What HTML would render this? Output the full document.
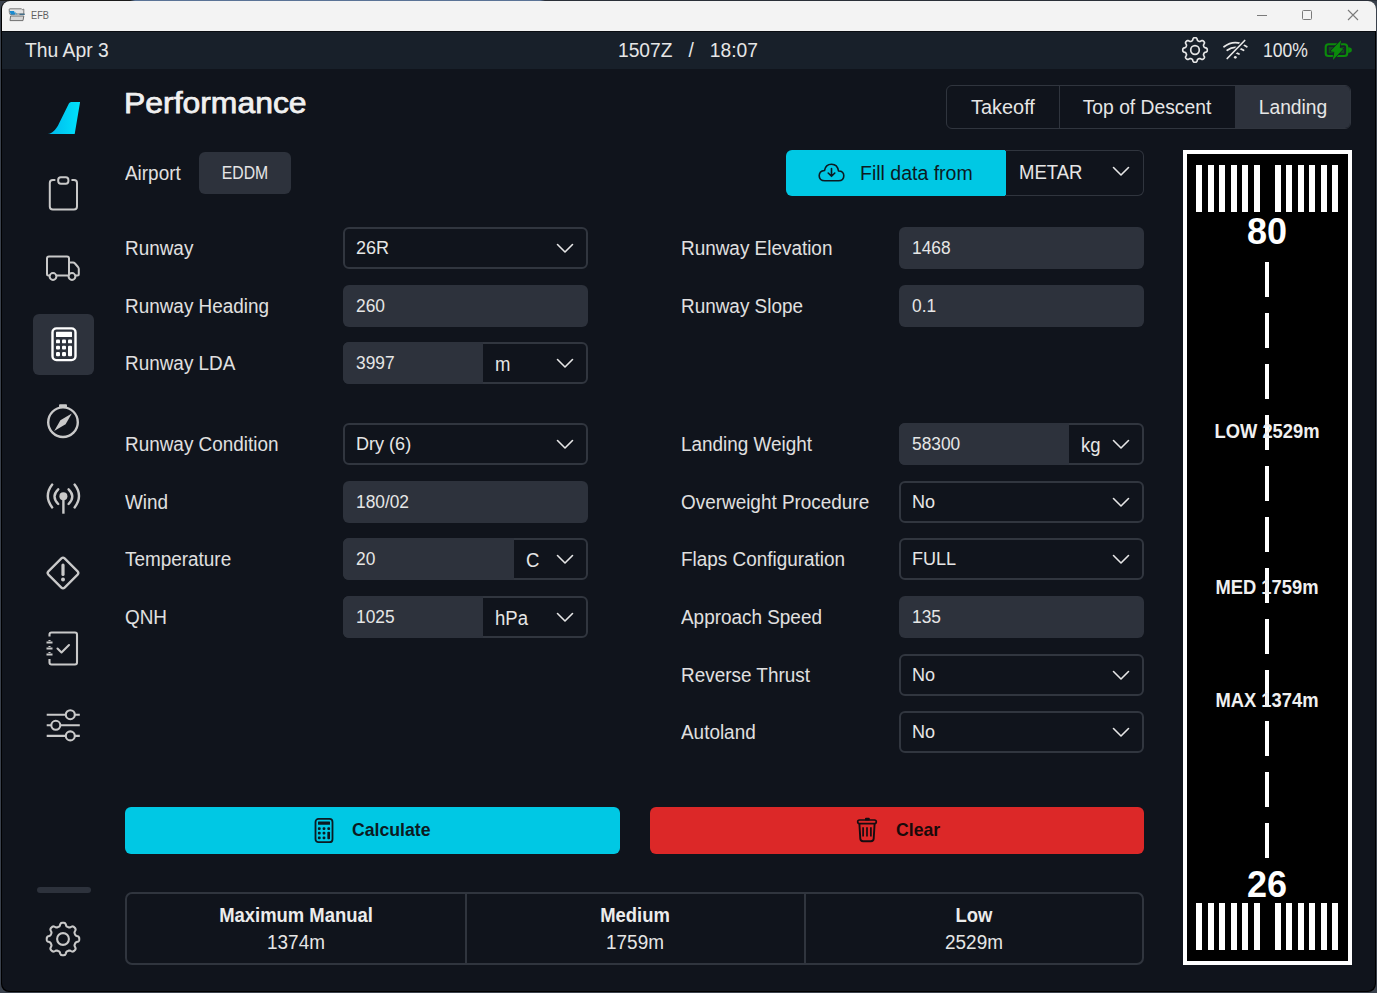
<!DOCTYPE html>
<html><head><meta charset="utf-8">
<style>
*{box-sizing:border-box;margin:0;padding:0}
html,body{width:1377px;height:993px;overflow:hidden;background:#3a414c;font-family:"Liberation Sans",sans-serif;position:relative}
.a{position:absolute}
.t{position:absolute;white-space:nowrap}
svg{display:block}
</style></head><body>

<div class="a" style="left:0px;top:0px;width:1377px;height:1px;background:linear-gradient(90deg,#1a1a1a 0,#1a1a1a 130px,#5a7396 135px,#5a7396 540px,#2a2f38 545px,#2a2f38 100%)"></div>
<div class="a" style="left:1px;top:1px;width:1375px;height:991px;background:#000;border-radius:8px"></div>
<div class="a" style="left:2px;top:1px;width:1373px;height:990px;background:#10141c;border-radius:8px;overflow:hidden"></div>
<div class="a" style="left:2px;top:1px;width:1374px;height:30px;background:#f3f3f3;border-radius:8px 8px 0 0"></div>
<div class="a" style="left:2px;top:31px;width:1373px;height:1px;background:#0a0d12"></div>
<div class="a" style="left:2px;top:32px;width:1373px;height:37px;background:#18202a"></div>
<div class="a" style="left:6px;top:6px;width:24px;height:18px"><svg width="24" height="18" viewBox="0 0 24 18"><path d="M3.2 3.5 Q3 2.8 4 2.8 H15.5 L16.5 3.8 Q17 3 17.8 3.2 V8 H9 L8 8.6 Q6 8.4 4.2 8.6 Q3 7 3.2 3.5 Z" fill="#e2e2e2" stroke="#6e6e6e" stroke-width="0.9"/><path d="M3.6 5 H8 L9.5 8.4 H4.8 Z" fill="#1a8ad0"/><path d="M8.8 5.5 L10 8.4 H11.5 Z" fill="#3a9ac8"/><path d="M13.5 8.3 H18.8" stroke="#3d6a86" stroke-width="1.3"/><path d="M4.6 10 H17.8 L17 14.6 H4 Z" fill="#d6d6d6" stroke="#707070" stroke-width="1"/></svg></div>
<div class="t" style="left:31px;top:-5.0px;line-height:40px;font-size:11.5px;color:#5f5f5f;font-weight:normal;transform:scaleX(0.8);transform-origin:left center;">EFB</div>
<div class="a" style="left:1257px;top:15px;width:10px;height:1px;background:#7a7a7a"></div>
<div class="a" style="left:1302px;top:10px;width:10px;height:10px;border:1px solid #7a7a7a;border-radius:1.5px"></div>
<div class="a" style="left:1347px;top:9px;width:12px;height:12px"><svg width="12" height="12" viewBox="0 0 12 12"><path d="M1 1 L11 11 M11 1 L1 11" stroke="#7a7a7a" stroke-width="1.1"/></svg></div>
<div class="t" style="left:25px;top:30.0px;line-height:40px;font-size:19.5px;color:#e6e6e6;font-weight:normal;transform:scaleX(0.99);transform-origin:left center;">Thu Apr 3</div>
<div class="t" style="left:618px;top:30.0px;line-height:40px;font-size:19.5px;color:#e6e6e6;font-weight:normal;transform:scaleX(0.985);transform-origin:left center;">1507Z&nbsp;&nbsp;&nbsp;/&nbsp;&nbsp;&nbsp;18:07</div>
<div class="t" style="left:1263px;top:30.0px;line-height:40px;font-size:19.5px;color:#e6e6e6;font-weight:normal;transform:scaleX(0.9);transform-origin:left center;">100%</div>
<div class="a" style="left:1180.2px;top:35.3px"><svg width="30" height="30" viewBox="0 0 30 30"><path fill="none" stroke="#e6e6e6" stroke-width="1.7" stroke-linejoin="round" d="M15.00 2.75 L15.48 2.77 L15.96 2.84 L16.42 3.03 L16.83 3.47 L17.13 4.31 L17.36 5.15 L17.64 5.62 L17.97 5.86 L18.31 6.03 L18.65 6.18 L19.00 6.32 L19.36 6.44 L19.76 6.50 L20.29 6.36 L21.06 5.94 L21.86 5.56 L22.46 5.53 L22.92 5.73 L23.31 6.01 L23.66 6.34 L23.99 6.69 L24.27 7.08 L24.47 7.54 L24.44 8.14 L24.06 8.94 L23.64 9.71 L23.50 10.24 L23.56 10.64 L23.68 11.00 L23.82 11.35 L23.97 11.69 L24.14 12.03 L24.38 12.36 L24.85 12.64 L25.69 12.87 L26.53 13.17 L26.97 13.58 L27.16 14.04 L27.23 14.52 L27.25 15.00 L27.23 15.48 L27.16 15.96 L26.97 16.42 L26.53 16.83 L25.69 17.13 L24.85 17.36 L24.38 17.64 L24.14 17.97 L23.97 18.31 L23.82 18.65 L23.68 19.00 L23.56 19.36 L23.50 19.76 L23.64 20.29 L24.06 21.06 L24.44 21.86 L24.47 22.46 L24.27 22.92 L23.99 23.31 L23.66 23.66 L23.31 23.99 L22.92 24.27 L22.46 24.47 L21.86 24.44 L21.06 24.06 L20.29 23.64 L19.76 23.50 L19.36 23.56 L19.00 23.68 L18.65 23.82 L18.31 23.97 L17.97 24.14 L17.64 24.38 L17.36 24.85 L17.13 25.69 L16.83 26.53 L16.42 26.97 L15.96 27.16 L15.48 27.23 L15.00 27.25 L14.52 27.23 L14.04 27.16 L13.58 26.97 L13.17 26.53 L12.87 25.69 L12.64 24.85 L12.36 24.38 L12.03 24.14 L11.69 23.97 L11.35 23.82 L11.00 23.68 L10.64 23.56 L10.24 23.50 L9.71 23.64 L8.94 24.06 L8.14 24.44 L7.54 24.47 L7.08 24.27 L6.69 23.99 L6.34 23.66 L6.01 23.31 L5.73 22.92 L5.53 22.46 L5.56 21.86 L5.94 21.06 L6.36 20.29 L6.50 19.76 L6.44 19.36 L6.32 19.00 L6.18 18.65 L6.03 18.31 L5.86 17.97 L5.62 17.64 L5.15 17.36 L4.31 17.13 L3.47 16.83 L3.03 16.42 L2.84 15.96 L2.77 15.48 L2.75 15.00 L2.77 14.52 L2.84 14.04 L3.03 13.58 L3.47 13.17 L4.31 12.87 L5.15 12.64 L5.62 12.36 L5.86 12.03 L6.03 11.69 L6.18 11.35 L6.32 11.00 L6.44 10.64 L6.50 10.24 L6.36 9.71 L5.94 8.94 L5.56 8.14 L5.53 7.54 L5.73 7.08 L6.01 6.69 L6.34 6.34 L6.69 6.01 L7.08 5.73 L7.54 5.53 L8.14 5.56 L8.94 5.94 L9.71 6.36 L10.24 6.50 L10.64 6.44 L11.00 6.32 L11.35 6.18 L11.69 6.03 L12.03 5.86 L12.36 5.62 L12.64 5.15 L12.87 4.31 L13.17 3.47 L13.58 3.03 L14.04 2.84 L14.52 2.77 Z"/><circle cx="15" cy="15" r="4.3" fill="none" stroke="#e6e6e6" stroke-width="1.7"/></svg></div>
<div class="a" style="left:1222px;top:38px"><svg width="30" height="24" viewBox="0 0 30 24"><g fill="none" stroke="#e6e6e6" stroke-width="1.7" stroke-linecap="round"><path d="M2 8.8 Q13 0.5 24.8 8.8"/><path d="M5.2 12.3 Q13 6.5 21.6 12.3"/><path d="M9.5 16 Q13 13.6 17 16"/></g><circle cx="13.3" cy="19.3" r="1.4" fill="#e6e6e6"/><path d="M24 1.5 L4 23" stroke="#18202a" stroke-width="4.5"/><path d="M22.7 2.5 L5.2 20.5" stroke="#e6e6e6" stroke-width="1.7" stroke-linecap="round"/></svg></div>
<div class="a" style="left:1320px;top:36px"><svg width="36" height="28" viewBox="0 0 36 28"><rect x="5.7" y="8.2" width="21.5" height="11.8" rx="2.8" fill="none" stroke="#0b8a0b" stroke-width="2.1"/><path d="M28.2 11.3 A3.7 2.8 0 0 1 28.2 16.9 Z" fill="#0b8a0b"/><rect x="8.7" y="11" width="15.5" height="6.2" fill="#0b8a0b" opacity="0.45"/><path d="M20.9 4.5 L10.7 15.2 L14.6 15.8 L13 23.7 L23.1 12.7 L19.5 12.1 Z" fill="#0b8a0b" stroke="#18202a" stroke-width="1.6" stroke-linejoin="round" paint-order="stroke"/><path d="M20.9 4.5 L10.7 15.2 L14.6 15.8 L13 23.7 L23.1 12.7 L19.5 12.1 Z" fill="#0b8a0b"/></svg></div>
<div class="a" style="left:40px;top:95px"><svg width="50" height="45" viewBox="0 0 50 45"><defs><linearGradient id="lg" x1="0" y1="0" x2="1" y2="0"><stop offset="0" stop-color="#00b8ec"/><stop offset="1" stop-color="#00e2fb"/></linearGradient></defs><path d="M31.2 7 H40.1 L34.7 39 H7.7 C12.5 38.6 16.2 34.5 19 28.5 L28.9 8.6 Q29.7 7 31.2 7 Z" fill="url(#lg)"/></svg></div>
<div class="a" style="left:40px;top:168px"><svg width="45" height="50" viewBox="0 0 45 50"><path d="M14.6 12 H12.8 Q9.8 12 9.8 15 V38.5 Q9.8 41.5 12.8 41.5 H34 Q37 41.5 37 38.5 V15 Q37 12 34 12 H32.2" fill="none" stroke="#c9c9c9" stroke-width="2" stroke-linecap="round"/><rect x="18.2" y="9.3" width="10.2" height="6.4" rx="2.6" fill="none" stroke="#c9c9c9" stroke-width="2"/></svg></div>
<div class="a" style="left:45px;top:255px"><svg width="36" height="28" viewBox="0 0 36 28"><path d="M4 1.5 H22 Q24 1.5 24 3.5 V20.5 H3.5 Q2 20.5 2 19 V3.5 Q2 1.5 4 1.5 Z M24 7.5 H28 Q29 7.5 30 8.5 L33 12 Q33.8 13 33.8 14 V19 Q33.8 20.5 32.3 20.5 H24" fill="none" stroke="#c9c9c9" stroke-width="2" stroke-linejoin="round"/><circle cx="8" cy="21.5" r="3.4" fill="#10141c" stroke="#c9c9c9" stroke-width="2"/><circle cx="27" cy="21.5" r="3.4" fill="#10141c" stroke="#c9c9c9" stroke-width="2"/></svg></div>
<div class="a" style="left:33px;top:314px;width:61px;height:61px;background:#2d323c;border-radius:6px"></div>
<div class="a" style="left:50.5px;top:327.3px"><svg width="26" height="34.6" viewBox="0 0 26 36" preserveAspectRatio="none"><rect x="1.5" y="1.5" width="23" height="33" rx="4" fill="none" stroke="#fff" stroke-width="2.4"/><rect x="5" y="5" width="16" height="5.5" fill="#fff" rx="0.6"/><g fill="#fff"><rect x="5" y="13" width="4" height="4" rx="1"/><rect x="11" y="13" width="4" height="4" rx="1"/><rect x="17" y="13" width="4" height="4" rx="1"/><rect x="5" y="19.5" width="4" height="4" rx="1"/><rect x="11" y="19.5" width="4" height="4" rx="1"/><rect x="17" y="19.5" width="4" height="11" rx="1"/><rect x="5" y="26" width="4" height="4.5" rx="1.2"/><rect x="11" y="26" width="4" height="4.5" rx="1.2"/></g></svg></div>
<div class="a" style="left:46px;top:403px"><svg width="34" height="36" viewBox="0 0 34 36"><circle cx="17" cy="19.2" r="14.8" fill="none" stroke="#c9c9c9" stroke-width="2.4"/><rect x="13" y="1.2" width="8" height="3.4" rx="1" fill="#c9c9c9"/><path d="M25.8 10.4 L19.6 21.2 L8.2 28 L14.4 17.2 Z" fill="#c9c9c9"/></svg></div>
<div class="a" style="left:45px;top:483px"><svg width="36" height="33" viewBox="0 0 36 33"><circle cx="18.4" cy="13.3" r="4" fill="#c9c9c9"/><path d="M18.4 15 V30.7" stroke="#c9c9c9" stroke-width="2.4"/><path d="M13.2 6.3 Q5.8 13.5 13.2 21 M23.6 6.3 Q31 13.5 23.6 21 M7.2 1.6 Q-1.6 13 7.2 24.4 M29.6 1.6 Q38.4 13 29.6 24.4" fill="none" stroke="#c9c9c9" stroke-width="2.4" stroke-linecap="round"/></svg></div>
<div class="a" style="left:45px;top:555px"><svg width="36" height="36" viewBox="0 0 36 36"><path d="M16.4 3.4 Q18 1.8 19.6 3.4 L32.6 16.4 Q34.2 18 32.6 19.6 L19.6 32.6 Q18 34.2 16.4 32.6 L3.4 19.6 Q1.8 18 3.4 16.4 Z" fill="none" stroke="#c9c9c9" stroke-width="2.3" stroke-linejoin="round"/><path d="M18 10 V19.5" stroke="#c9c9c9" stroke-width="3.2" stroke-linecap="round"/><circle cx="18" cy="24.6" r="2" fill="#c9c9c9"/></svg></div>
<div class="a" style="left:45px;top:631px"><svg width="36" height="35" viewBox="0 0 36 35"><path d="M4.5 5.5 V3.5 Q4.5 1.5 6.5 1.5 H30 Q32 1.5 32 3.5 V31.5 Q32 33.5 30 33.5 H6.5 Q4.5 33.5 4.5 31.5 V28" fill="none" stroke="#c9c9c9" stroke-width="2.1"/><path d="M1.5 11.5 H7.5 M1.5 17.5 H7.5 M1.5 23.5 H7.5" stroke="#c9c9c9" stroke-width="2.1"/><path d="M4.5 9 V10 M4.5 15 V16 M4.5 21 V22" stroke="#c9c9c9" stroke-width="2.1"/><path d="M12.5 17.5 L16.5 21.5 L24 14" fill="none" stroke="#c9c9c9" stroke-width="2.1" stroke-linecap="round" stroke-linejoin="round"/></svg></div>
<div class="a" style="left:45px;top:708px"><svg width="36" height="34" viewBox="0 0 36 34"><path d="M1.7 6.7 H20.8 M29.8 6.7 H34.8 M1.7 17.3 H6.3 M15.3 17.3 H34.8 M1.7 27.9 H20.8 M29.8 27.9 H34.8" stroke="#c9c9c9" stroke-width="2.1"/><circle cx="25.3" cy="6.7" r="4.5" fill="none" stroke="#c9c9c9" stroke-width="2.1"/><circle cx="10.8" cy="17.3" r="4.5" fill="none" stroke="#c9c9c9" stroke-width="2.1"/><circle cx="25.3" cy="27.9" r="4.5" fill="none" stroke="#c9c9c9" stroke-width="2.1"/></svg></div>
<div class="a" style="left:37px;top:887px;width:54px;height:6px;background:#2d323c;border-radius:3px"></div>
<div class="a" style="left:43.2px;top:918.8px"><svg width="40" height="40" viewBox="0 0 40 40"><path fill="none" stroke="#c9c9c9" stroke-width="2.1" stroke-linejoin="round" d="M20.00 3.75 L20.64 3.78 L21.27 3.87 L21.88 4.10 L22.43 4.65 L22.85 5.68 L23.19 6.72 L23.58 7.31 L24.02 7.62 L24.49 7.84 L24.96 8.04 L25.43 8.23 L25.91 8.40 L26.44 8.50 L27.14 8.35 L28.11 7.86 L29.13 7.43 L29.91 7.42 L30.51 7.70 L31.02 8.08 L31.49 8.51 L31.92 8.98 L32.30 9.49 L32.58 10.09 L32.57 10.87 L32.14 11.89 L31.65 12.86 L31.50 13.56 L31.60 14.09 L31.77 14.57 L31.96 15.04 L32.16 15.51 L32.38 15.98 L32.69 16.42 L33.28 16.81 L34.32 17.15 L35.35 17.57 L35.90 18.12 L36.13 18.73 L36.22 19.36 L36.25 20.00 L36.22 20.64 L36.13 21.27 L35.90 21.88 L35.35 22.43 L34.32 22.85 L33.28 23.19 L32.69 23.58 L32.38 24.02 L32.16 24.49 L31.96 24.96 L31.77 25.43 L31.60 25.91 L31.50 26.44 L31.65 27.14 L32.14 28.11 L32.57 29.13 L32.58 29.91 L32.30 30.51 L31.92 31.02 L31.49 31.49 L31.02 31.92 L30.51 32.30 L29.91 32.58 L29.13 32.57 L28.11 32.14 L27.14 31.65 L26.44 31.50 L25.91 31.60 L25.43 31.77 L24.96 31.96 L24.49 32.16 L24.02 32.38 L23.58 32.69 L23.19 33.28 L22.85 34.32 L22.43 35.35 L21.88 35.90 L21.27 36.13 L20.64 36.22 L20.00 36.25 L19.36 36.22 L18.73 36.13 L18.12 35.90 L17.57 35.35 L17.15 34.32 L16.81 33.28 L16.42 32.69 L15.98 32.38 L15.51 32.16 L15.04 31.96 L14.57 31.77 L14.09 31.60 L13.56 31.50 L12.86 31.65 L11.89 32.14 L10.87 32.57 L10.09 32.58 L9.49 32.30 L8.98 31.92 L8.51 31.49 L8.08 31.02 L7.70 30.51 L7.42 29.91 L7.43 29.13 L7.86 28.11 L8.35 27.14 L8.50 26.44 L8.40 25.91 L8.23 25.43 L8.04 24.96 L7.84 24.49 L7.62 24.02 L7.31 23.58 L6.72 23.19 L5.68 22.85 L4.65 22.43 L4.10 21.88 L3.87 21.27 L3.78 20.64 L3.75 20.00 L3.78 19.36 L3.87 18.73 L4.10 18.12 L4.65 17.57 L5.68 17.15 L6.72 16.81 L7.31 16.42 L7.62 15.98 L7.84 15.51 L8.04 15.04 L8.23 14.57 L8.40 14.09 L8.50 13.56 L8.35 12.86 L7.86 11.89 L7.43 10.87 L7.42 10.09 L7.70 9.49 L8.08 8.98 L8.51 8.51 L8.98 8.08 L9.49 7.70 L10.09 7.42 L10.87 7.43 L11.89 7.86 L12.86 8.35 L13.56 8.50 L14.09 8.40 L14.57 8.23 L15.04 8.04 L15.51 7.84 L15.98 7.62 L16.42 7.31 L16.81 6.72 L17.15 5.68 L17.57 4.65 L18.12 4.10 L18.73 3.87 L19.36 3.78 Z"/><circle cx="20" cy="20" r="5.9" fill="none" stroke="#c9c9c9" stroke-width="2.1"/></svg></div>
<div class="t" style="left:124px;top:83.2px;line-height:40px;font-size:29px;color:#f0f0f0;font-weight:normal;transform:scaleX(1.1);transform-origin:left center;-webkit-text-stroke:0.75px #f0f0f0;">Performance</div>
<div class="a" style="left:946px;top:85px;width:405px;height:44px;border:1px solid #30353e;border-radius:6px;overflow:hidden"></div>
<div class="a" style="left:1235px;top:86px;width:115px;height:42px;background:#2d323c;border-radius:0 5px 5px 0"></div>
<div class="a" style="left:1059px;top:86px;width:1px;height:42px;background:#30353e"></div>
<div class="t" style="left:702.5px;width:600px;text-align:center;top:87.0px;line-height:40px;font-size:20.5px;color:#e6e6e6;font-weight:normal;transform:scaleX(0.97);transform-origin:center center;">Takeoff</div>
<div class="t" style="left:847px;width:600px;text-align:center;top:87.0px;line-height:40px;font-size:20.5px;color:#e6e6e6;font-weight:normal;transform:scaleX(0.94);transform-origin:center center;">Top of Descent</div>
<div class="t" style="left:993px;width:600px;text-align:center;top:87.0px;line-height:40px;font-size:20.5px;color:#e6e6e6;font-weight:normal;transform:scaleX(0.94);transform-origin:center center;">Landing</div>
<div class="t" style="left:125px;top:153.0px;line-height:40px;font-size:19.5px;color:#e0e0e0;font-weight:normal;transform:scaleX(0.97);transform-origin:left center;">Airport</div>
<div class="a" style="left:199px;top:152px;width:92px;height:42px;background:#2d323c;border-radius:6px"></div>
<div class="t" style="left:-55px;width:600px;text-align:center;top:153.0px;line-height:40px;font-size:17.5px;color:#e6e6e6;font-weight:normal;transform:scaleX(0.9);transform-origin:center center;">EDDM</div>
<div class="a" style="left:786px;top:150px;width:220px;height:46px;background:#00c8e4;border-radius:6px 0 0 6px"></div>
<div class="a" style="left:1005px;top:150px;width:139px;height:46px;border:1.5px solid #30353e;border-left:none;border-radius:0 6px 6px 0"></div>
<div class="a" style="left:818px;top:163px"><svg width="27" height="19" viewBox="0 0 27 19"><path d="M7 17.8 H20.5 Q25.8 17.8 25.8 12.8 Q25.8 8 20.5 8 Q19.5 1.2 13.5 1.2 Q7.5 1.2 6.5 7.5 Q1.2 8 1.2 12.8 Q1.2 17.8 7 17.8 Z" fill="none" stroke="#0c1a22" stroke-width="1.6" stroke-linejoin="round"/><path d="M13.5 5.5 V13.2 M10.2 10 L13.5 13.3 L16.8 10" fill="none" stroke="#0c1a22" stroke-width="1.6" stroke-linecap="round" stroke-linejoin="round"/></svg></div>
<div class="t" style="left:860px;top:153.0px;line-height:40px;font-size:19.5px;color:#0c1a22;font-weight:normal;transform:scaleX(1.0);transform-origin:left center;">Fill data from</div>
<div class="t" style="left:1019px;top:152.0px;line-height:40px;font-size:19.5px;color:#e6e6e6;font-weight:normal;transform:scaleX(0.95);transform-origin:left center;">METAR</div>
<div class="a" style="left:1112px;top:166px;width:18px;height:11px"><svg width="18" height="11" viewBox="0 0 18 11"><path d="M1.5 1.5 L9 9 L16.5 1.5" fill="none" stroke="#e6e6e6" stroke-width="1.6" stroke-linecap="round" stroke-linejoin="round"/></svg></div>
<div class="t" style="left:125px;top:228.0px;line-height:40px;font-size:19.5px;color:#e0e0e0;font-weight:normal;transform:scaleX(0.97);transform-origin:left center;">Runway</div>
<div class="a" style="left:343px;top:227px;width:245px;height:42.4px;border:2px solid #31363f;border-radius:6px"></div>
<div class="t" style="left:356px;top:228.0px;line-height:40px;font-size:19px;color:#e6e6e6;font-weight:normal;transform:scaleX(0.95);transform-origin:left center;">26R</div>
<div class="a" style="left:556.3px;top:243px;width:18px;height:11px"><svg width="18" height="11" viewBox="0 0 18 11"><path d="M1.5 1.5 L9 9 L16.5 1.5" fill="none" stroke="#e6e6e6" stroke-width="1.6" stroke-linecap="round" stroke-linejoin="round"/></svg></div>
<div class="t" style="left:125px;top:286.0px;line-height:40px;font-size:19.5px;color:#e0e0e0;font-weight:normal;transform:scaleX(0.97);transform-origin:left center;">Runway Heading</div>
<div class="a" style="left:343px;top:285px;width:245px;height:42.4px;background:#2d323c;border-radius:6px"></div>
<div class="t" style="left:356px;top:286.2px;line-height:40px;font-size:17.5px;color:#e6e6e6;font-weight:normal;transform:scaleX(0.99);transform-origin:left center;">260</div>
<div class="t" style="left:125px;top:343.0px;line-height:40px;font-size:19.5px;color:#e0e0e0;font-weight:normal;transform:scaleX(0.97);transform-origin:left center;">Runway LDA</div>
<div class="a" style="left:343px;top:342px;width:245px;height:42.4px;border:2px solid #31363f;border-radius:6px"></div>
<div class="a" style="left:343px;top:342px;width:140px;height:42.4px;background:#2d323c;border-radius:6px 0 0 6px"></div>
<div class="t" style="left:356px;top:343.2px;line-height:40px;font-size:17.5px;color:#e6e6e6;font-weight:normal;transform:scaleX(0.99);transform-origin:left center;">3997</div>
<div class="t" style="left:495px;top:343.6px;line-height:40px;font-size:19.5px;color:#e6e6e6;font-weight:normal;transform:scaleX(0.95);transform-origin:left center;">m</div>
<div class="a" style="left:556.3px;top:358px;width:18px;height:11px"><svg width="18" height="11" viewBox="0 0 18 11"><path d="M1.5 1.5 L9 9 L16.5 1.5" fill="none" stroke="#e6e6e6" stroke-width="1.6" stroke-linecap="round" stroke-linejoin="round"/></svg></div>
<div class="t" style="left:125px;top:424.0px;line-height:40px;font-size:19.5px;color:#e0e0e0;font-weight:normal;transform:scaleX(0.97);transform-origin:left center;">Runway Condition</div>
<div class="a" style="left:343px;top:423px;width:245px;height:42.4px;border:2px solid #31363f;border-radius:6px"></div>
<div class="t" style="left:356px;top:424.0px;line-height:40px;font-size:19px;color:#e6e6e6;font-weight:normal;transform:scaleX(0.95);transform-origin:left center;">Dry (6)</div>
<div class="a" style="left:556.3px;top:439px;width:18px;height:11px"><svg width="18" height="11" viewBox="0 0 18 11"><path d="M1.5 1.5 L9 9 L16.5 1.5" fill="none" stroke="#e6e6e6" stroke-width="1.6" stroke-linecap="round" stroke-linejoin="round"/></svg></div>
<div class="t" style="left:125px;top:482.0px;line-height:40px;font-size:19.5px;color:#e0e0e0;font-weight:normal;transform:scaleX(0.97);transform-origin:left center;">Wind</div>
<div class="a" style="left:343px;top:481px;width:245px;height:42.4px;background:#2d323c;border-radius:6px"></div>
<div class="t" style="left:356px;top:482.2px;line-height:40px;font-size:17.5px;color:#e6e6e6;font-weight:normal;transform:scaleX(0.99);transform-origin:left center;">180/02</div>
<div class="t" style="left:125px;top:539.0px;line-height:40px;font-size:19.5px;color:#e0e0e0;font-weight:normal;transform:scaleX(0.97);transform-origin:left center;">Temperature</div>
<div class="a" style="left:343px;top:538px;width:245px;height:42.4px;border:2px solid #31363f;border-radius:6px"></div>
<div class="a" style="left:343px;top:538px;width:171px;height:42.4px;background:#2d323c;border-radius:6px 0 0 6px"></div>
<div class="t" style="left:356px;top:539.2px;line-height:40px;font-size:17.5px;color:#e6e6e6;font-weight:normal;transform:scaleX(0.99);transform-origin:left center;">20</div>
<div class="t" style="left:526px;top:539.6px;line-height:40px;font-size:19.5px;color:#e6e6e6;font-weight:normal;transform:scaleX(0.95);transform-origin:left center;">C</div>
<div class="a" style="left:556.3px;top:554px;width:18px;height:11px"><svg width="18" height="11" viewBox="0 0 18 11"><path d="M1.5 1.5 L9 9 L16.5 1.5" fill="none" stroke="#e6e6e6" stroke-width="1.6" stroke-linecap="round" stroke-linejoin="round"/></svg></div>
<div class="t" style="left:125px;top:597.0px;line-height:40px;font-size:19.5px;color:#e0e0e0;font-weight:normal;transform:scaleX(0.97);transform-origin:left center;">QNH</div>
<div class="a" style="left:343px;top:596px;width:245px;height:42.4px;border:2px solid #31363f;border-radius:6px"></div>
<div class="a" style="left:343px;top:596px;width:140px;height:42.4px;background:#2d323c;border-radius:6px 0 0 6px"></div>
<div class="t" style="left:356px;top:597.2px;line-height:40px;font-size:17.5px;color:#e6e6e6;font-weight:normal;transform:scaleX(0.99);transform-origin:left center;">1025</div>
<div class="t" style="left:495px;top:597.6px;line-height:40px;font-size:19.5px;color:#e6e6e6;font-weight:normal;transform:scaleX(0.95);transform-origin:left center;">hPa</div>
<div class="a" style="left:556.3px;top:612px;width:18px;height:11px"><svg width="18" height="11" viewBox="0 0 18 11"><path d="M1.5 1.5 L9 9 L16.5 1.5" fill="none" stroke="#e6e6e6" stroke-width="1.6" stroke-linecap="round" stroke-linejoin="round"/></svg></div>
<div class="t" style="left:681px;top:228.0px;line-height:40px;font-size:19.5px;color:#e0e0e0;font-weight:normal;transform:scaleX(0.97);transform-origin:left center;">Runway Elevation</div>
<div class="a" style="left:899px;top:227px;width:245px;height:42.4px;background:#2d323c;border-radius:6px"></div>
<div class="t" style="left:912px;top:228.2px;line-height:40px;font-size:17.5px;color:#e6e6e6;font-weight:normal;transform:scaleX(0.99);transform-origin:left center;">1468</div>
<div class="t" style="left:681px;top:286.0px;line-height:40px;font-size:19.5px;color:#e0e0e0;font-weight:normal;transform:scaleX(0.97);transform-origin:left center;">Runway Slope</div>
<div class="a" style="left:899px;top:285px;width:245px;height:42.4px;background:#2d323c;border-radius:6px"></div>
<div class="t" style="left:912px;top:286.2px;line-height:40px;font-size:17.5px;color:#e6e6e6;font-weight:normal;transform:scaleX(0.99);transform-origin:left center;">0.1</div>
<div class="t" style="left:681px;top:424.0px;line-height:40px;font-size:19.5px;color:#e0e0e0;font-weight:normal;transform:scaleX(0.97);transform-origin:left center;">Landing Weight</div>
<div class="a" style="left:899px;top:423px;width:245px;height:42.4px;border:2px solid #31363f;border-radius:6px"></div>
<div class="a" style="left:899px;top:423px;width:170px;height:42.4px;background:#2d323c;border-radius:6px 0 0 6px"></div>
<div class="t" style="left:912px;top:424.2px;line-height:40px;font-size:17.5px;color:#e6e6e6;font-weight:normal;transform:scaleX(0.99);transform-origin:left center;">58300</div>
<div class="t" style="left:1081px;top:424.6px;line-height:40px;font-size:19.5px;color:#e6e6e6;font-weight:normal;transform:scaleX(0.95);transform-origin:left center;">kg</div>
<div class="a" style="left:1112.3px;top:439px;width:18px;height:11px"><svg width="18" height="11" viewBox="0 0 18 11"><path d="M1.5 1.5 L9 9 L16.5 1.5" fill="none" stroke="#e6e6e6" stroke-width="1.6" stroke-linecap="round" stroke-linejoin="round"/></svg></div>
<div class="t" style="left:681px;top:482.0px;line-height:40px;font-size:19.5px;color:#e0e0e0;font-weight:normal;transform:scaleX(0.97);transform-origin:left center;">Overweight Procedure</div>
<div class="a" style="left:899px;top:481px;width:245px;height:42.4px;border:2px solid #31363f;border-radius:6px"></div>
<div class="t" style="left:912px;top:482.0px;line-height:40px;font-size:19px;color:#e6e6e6;font-weight:normal;transform:scaleX(0.95);transform-origin:left center;">No</div>
<div class="a" style="left:1112.3px;top:497px;width:18px;height:11px"><svg width="18" height="11" viewBox="0 0 18 11"><path d="M1.5 1.5 L9 9 L16.5 1.5" fill="none" stroke="#e6e6e6" stroke-width="1.6" stroke-linecap="round" stroke-linejoin="round"/></svg></div>
<div class="t" style="left:681px;top:539.0px;line-height:40px;font-size:19.5px;color:#e0e0e0;font-weight:normal;transform:scaleX(0.97);transform-origin:left center;">Flaps Configuration</div>
<div class="a" style="left:899px;top:538px;width:245px;height:42.4px;border:2px solid #31363f;border-radius:6px"></div>
<div class="t" style="left:912px;top:539.0px;line-height:40px;font-size:19px;color:#e6e6e6;font-weight:normal;transform:scaleX(0.95);transform-origin:left center;">FULL</div>
<div class="a" style="left:1112.3px;top:554px;width:18px;height:11px"><svg width="18" height="11" viewBox="0 0 18 11"><path d="M1.5 1.5 L9 9 L16.5 1.5" fill="none" stroke="#e6e6e6" stroke-width="1.6" stroke-linecap="round" stroke-linejoin="round"/></svg></div>
<div class="t" style="left:681px;top:597.0px;line-height:40px;font-size:19.5px;color:#e0e0e0;font-weight:normal;transform:scaleX(0.97);transform-origin:left center;">Approach Speed</div>
<div class="a" style="left:899px;top:596px;width:245px;height:42.4px;background:#2d323c;border-radius:6px"></div>
<div class="t" style="left:912px;top:597.2px;line-height:40px;font-size:17.5px;color:#e6e6e6;font-weight:normal;transform:scaleX(0.99);transform-origin:left center;">135</div>
<div class="t" style="left:681px;top:655.0px;line-height:40px;font-size:19.5px;color:#e0e0e0;font-weight:normal;transform:scaleX(0.97);transform-origin:left center;">Reverse Thrust</div>
<div class="a" style="left:899px;top:654px;width:245px;height:42.4px;border:2px solid #31363f;border-radius:6px"></div>
<div class="t" style="left:912px;top:655.0px;line-height:40px;font-size:19px;color:#e6e6e6;font-weight:normal;transform:scaleX(0.95);transform-origin:left center;">No</div>
<div class="a" style="left:1112.3px;top:670px;width:18px;height:11px"><svg width="18" height="11" viewBox="0 0 18 11"><path d="M1.5 1.5 L9 9 L16.5 1.5" fill="none" stroke="#e6e6e6" stroke-width="1.6" stroke-linecap="round" stroke-linejoin="round"/></svg></div>
<div class="t" style="left:681px;top:712.0px;line-height:40px;font-size:19.5px;color:#e0e0e0;font-weight:normal;transform:scaleX(0.97);transform-origin:left center;">Autoland</div>
<div class="a" style="left:899px;top:711px;width:245px;height:42.4px;border:2px solid #31363f;border-radius:6px"></div>
<div class="t" style="left:912px;top:712.0px;line-height:40px;font-size:19px;color:#e6e6e6;font-weight:normal;transform:scaleX(0.95);transform-origin:left center;">No</div>
<div class="a" style="left:1112.3px;top:727px;width:18px;height:11px"><svg width="18" height="11" viewBox="0 0 18 11"><path d="M1.5 1.5 L9 9 L16.5 1.5" fill="none" stroke="#e6e6e6" stroke-width="1.6" stroke-linecap="round" stroke-linejoin="round"/></svg></div>
<div class="a" style="left:125px;top:807px;width:494.5px;height:46.5px;background:#00c8e4;border-radius:6px"></div>
<div class="a" style="left:313px;top:817px"><svg width="22" height="27" viewBox="0 0 22 27"><rect x="2.5" y="1.9" width="17" height="23.3" rx="3" fill="none" stroke="#0c1a22" stroke-width="1.8"/><rect x="5" y="4.4" width="12" height="3.4" rx="0.5" fill="#0c1a22"/><g fill="#0c1a22"><rect x="4.9" y="10.2" width="2.8" height="2.8" rx="1"/><rect x="9.6" y="10.2" width="2.8" height="2.8" rx="1"/><rect x="14.3" y="10.2" width="2.8" height="2.8" rx="1"/><rect x="4.9" y="14.8" width="2.8" height="2.8" rx="1"/><rect x="9.6" y="14.8" width="2.8" height="2.8" rx="1"/><rect x="4.9" y="19.4" width="2.8" height="2.8" rx="1"/><rect x="9.6" y="19.4" width="2.8" height="2.8" rx="1"/><rect x="14.35" y="14.8" width="2.7" height="7.4" rx="0.8"/></g></svg></div>
<div class="t" style="left:352px;top:810.2px;line-height:40px;font-size:18.5px;color:#0c1a22;font-weight:bold;transform:scaleX(0.955);transform-origin:left center;">Calculate</div>
<div class="a" style="left:649.8px;top:807px;width:494.5px;height:46.5px;background:#dc2828;border-radius:6px"></div>
<div class="a" style="left:855px;top:816px"><svg width="24" height="28" viewBox="0 0 24 28"><rect x="2.7" y="4" width="18.6" height="3.6" rx="1.8" fill="none" stroke="#140c10" stroke-width="1.7"/><rect x="10" y="1.8" width="4.8" height="2.6" rx="1" fill="#140c10"/><path d="M4.4 8 L5.3 22.6 Q5.5 25.2 8.1 25.2 H15.9 Q18.5 25.2 18.7 22.6 L19.6 8" fill="none" stroke="#140c10" stroke-width="1.9"/><path d="M8.1 11.2 V20.6 M12 11.2 V20.6 M15.9 11.2 V20.6" stroke="#140c10" stroke-width="1.7"/></svg></div>
<div class="t" style="left:895.5px;top:810.0px;line-height:40px;font-size:19px;color:#1a0a0a;font-weight:bold;transform:scaleX(0.93);transform-origin:left center;">Clear</div>
<div class="a" style="left:125px;top:892px;width:1019px;height:73px;border:2px solid #30353e;border-radius:7px"></div>
<div class="a" style="left:465px;top:893px;width:2px;height:71px;background:#30353e"></div>
<div class="a" style="left:804px;top:893px;width:2px;height:71px;background:#30353e"></div>
<div class="t" style="left:-4.5px;width:600px;text-align:center;top:895.0px;line-height:40px;font-size:19.5px;color:#ececec;font-weight:bold;transform:scaleX(0.945);transform-origin:center center;">Maximum Manual</div>
<div class="t" style="left:-4.5px;width:600px;text-align:center;top:922.0px;line-height:40px;font-size:19.5px;color:#e6e6e6;font-weight:normal;transform:scaleX(0.97);transform-origin:center center;">1374m</div>
<div class="t" style="left:335px;width:600px;text-align:center;top:895.0px;line-height:40px;font-size:19.5px;color:#ececec;font-weight:bold;transform:scaleX(0.945);transform-origin:center center;">Medium</div>
<div class="t" style="left:335px;width:600px;text-align:center;top:922.0px;line-height:40px;font-size:19.5px;color:#e6e6e6;font-weight:normal;transform:scaleX(0.97);transform-origin:center center;">1759m</div>
<div class="t" style="left:673.5px;width:600px;text-align:center;top:895.0px;line-height:40px;font-size:19.5px;color:#ececec;font-weight:bold;transform:scaleX(0.945);transform-origin:center center;">Low</div>
<div class="t" style="left:673.5px;width:600px;text-align:center;top:922.0px;line-height:40px;font-size:19.5px;color:#e6e6e6;font-weight:normal;transform:scaleX(0.97);transform-origin:center center;">2529m</div>
<div class="a" style="left:1183px;top:150px;width:169px;height:815px;background:#000;border:4px solid #fff"></div>
<div class="a" style="left:1196px;top:165px;width:6px;height:47px;background:#fff"></div>
<div class="a" style="left:1196px;top:903px;width:6px;height:47px;background:#fff"></div>
<div class="a" style="left:1207.5px;top:165px;width:6px;height:47px;background:#fff"></div>
<div class="a" style="left:1207.5px;top:903px;width:6px;height:47px;background:#fff"></div>
<div class="a" style="left:1219px;top:165px;width:6px;height:47px;background:#fff"></div>
<div class="a" style="left:1219px;top:903px;width:6px;height:47px;background:#fff"></div>
<div class="a" style="left:1230.5px;top:165px;width:6px;height:47px;background:#fff"></div>
<div class="a" style="left:1230.5px;top:903px;width:6px;height:47px;background:#fff"></div>
<div class="a" style="left:1242px;top:165px;width:6px;height:47px;background:#fff"></div>
<div class="a" style="left:1242px;top:903px;width:6px;height:47px;background:#fff"></div>
<div class="a" style="left:1253.5px;top:165px;width:6px;height:47px;background:#fff"></div>
<div class="a" style="left:1253.5px;top:903px;width:6px;height:47px;background:#fff"></div>
<div class="a" style="left:1274.5px;top:165px;width:6px;height:47px;background:#fff"></div>
<div class="a" style="left:1274.5px;top:903px;width:6px;height:47px;background:#fff"></div>
<div class="a" style="left:1286px;top:165px;width:6px;height:47px;background:#fff"></div>
<div class="a" style="left:1286px;top:903px;width:6px;height:47px;background:#fff"></div>
<div class="a" style="left:1297.5px;top:165px;width:6px;height:47px;background:#fff"></div>
<div class="a" style="left:1297.5px;top:903px;width:6px;height:47px;background:#fff"></div>
<div class="a" style="left:1309px;top:165px;width:6px;height:47px;background:#fff"></div>
<div class="a" style="left:1309px;top:903px;width:6px;height:47px;background:#fff"></div>
<div class="a" style="left:1320.5px;top:165px;width:6px;height:47px;background:#fff"></div>
<div class="a" style="left:1320.5px;top:903px;width:6px;height:47px;background:#fff"></div>
<div class="a" style="left:1332px;top:165px;width:6px;height:47px;background:#fff"></div>
<div class="a" style="left:1332px;top:903px;width:6px;height:47px;background:#fff"></div>
<div class="a" style="left:1265px;top:262px;width:4px;height:35px;background:#fff"></div>
<div class="a" style="left:1265px;top:313px;width:4px;height:35px;background:#fff"></div>
<div class="a" style="left:1265px;top:364px;width:4px;height:35px;background:#fff"></div>
<div class="a" style="left:1265px;top:415px;width:4px;height:35px;background:#fff"></div>
<div class="a" style="left:1265px;top:466px;width:4px;height:35px;background:#fff"></div>
<div class="a" style="left:1265px;top:517px;width:4px;height:35px;background:#fff"></div>
<div class="a" style="left:1265px;top:568px;width:4px;height:35px;background:#fff"></div>
<div class="a" style="left:1265px;top:619px;width:4px;height:35px;background:#fff"></div>
<div class="a" style="left:1265px;top:670px;width:4px;height:35px;background:#fff"></div>
<div class="a" style="left:1265px;top:721px;width:4px;height:35px;background:#fff"></div>
<div class="a" style="left:1265px;top:772px;width:4px;height:35px;background:#fff"></div>
<div class="a" style="left:1265px;top:823px;width:4px;height:35px;background:#fff"></div>
<div class="t" style="left:967.3px;width:600px;text-align:center;top:211.25px;line-height:40px;font-size:37.5px;color:#fff;font-weight:bold;transform:scaleX(0.96);transform-origin:center center;">80</div>
<div class="t" style="left:967px;width:600px;text-align:center;top:863.75px;line-height:40px;font-size:37.5px;color:#fff;font-weight:bold;transform:scaleX(0.96);transform-origin:center center;">26</div>
<div class="t" style="left:967.2px;width:600px;text-align:center;top:410.8px;line-height:40px;font-size:19.5px;color:#f0f0f0;font-weight:bold;transform:scaleX(0.94);transform-origin:center center;">LOW 2529m</div>
<div class="t" style="left:967.3px;width:600px;text-align:center;top:567.2px;line-height:40px;font-size:19.5px;color:#f0f0f0;font-weight:bold;transform:scaleX(0.94);transform-origin:center center;">MED 1759m</div>
<div class="t" style="left:967.2px;width:600px;text-align:center;top:679.8px;line-height:40px;font-size:19.5px;color:#f0f0f0;font-weight:bold;transform:scaleX(0.94);transform-origin:center center;">MAX 1374m</div>

</body></html>
